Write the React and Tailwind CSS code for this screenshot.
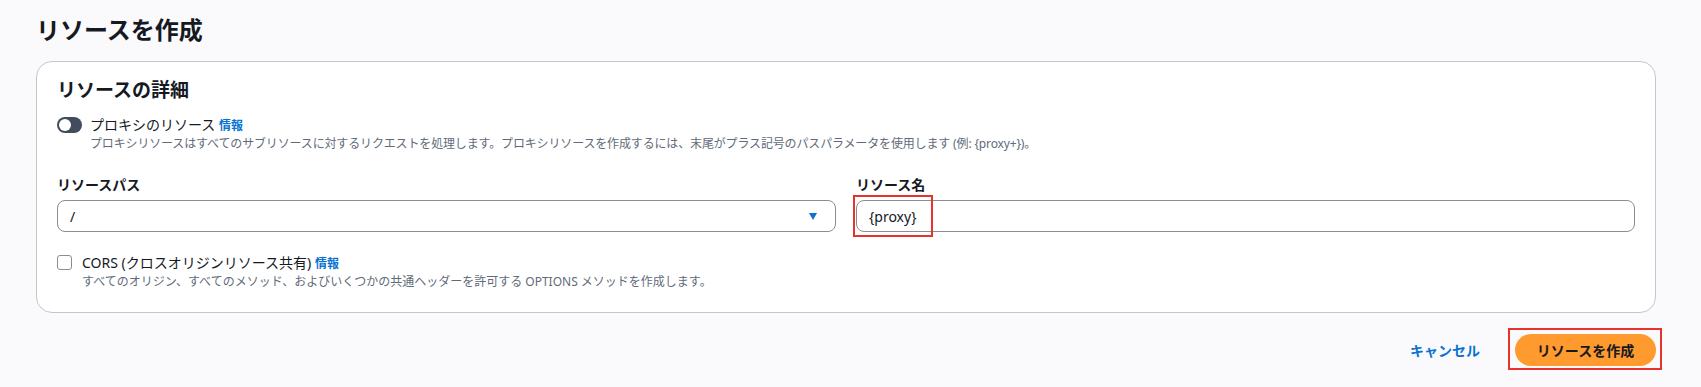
import React from "react";

const font = { fontFamily: '"Noto Sans", "Noto Sans CJK JP", sans-serif' };

export default function App() {
  return (
    <div className="min-h-[387px] bg-[#fafafd] pl-[36px] pr-[45px] pt-[15px] text-[#16191f]" style={font}>
      <h1 className="text-[24px] font-bold leading-[30px]">リソースを作成</h1>

      <div className="mt-[16px] rounded-2xl border border-[#c6c6cd] bg-white px-5 pt-[16px] pb-[22px]">
        <h2 className="text-[19px] font-bold leading-[24px]">リソースの詳細</h2>

        <div className="mt-[13px] flex gap-2">
          <div className="mt-[2px] flex h-[16px] w-[25px] shrink-0 items-center rounded-full bg-[#414d5c] px-[2px]">
            <div className="h-[12px] w-[12px] rounded-full bg-white" />
          </div>
          <div>
            <div className="text-[14px] leading-[20px]">
              プロキシのリソース <span className="text-[12px] font-bold text-[#0972d3]">情報</span>
            </div>
            <div className="text-[12px] leading-[16px] tracking-[-0.15px] text-[#5f6b7a]">
              プロキシリソースはすべてのサブリソースに対するリクエストを処理します。プロキシリソースを作成するには、末尾がプラス記号のパスパラメータを使用します (例: {"{proxy+}"})。
            </div>
          </div>
        </div>

        <div className="mt-[23px] grid grid-cols-2 gap-5">
          <div>
            <div className="text-[14px] font-bold leading-[20px]">リソースパス</div>
            <div className="mt-[5px] flex h-[32px] items-center justify-between rounded-lg border border-[#8c8c94] pl-3 pr-[18px] text-[14px]">
              <span>/</span>
              <svg width="8" height="7" viewBox="0 0 8 7">
                <path d="M0 0 L8 0 L4 7 Z" fill="#0972d3" />
              </svg>
            </div>
          </div>
          <div>
            <div className="text-[14px] font-bold leading-[20px]">リソース名</div>
            <div className="relative mt-[5px] flex h-[32px] items-center rounded-lg border border-[#8c8c94] pl-3 text-[14px]">
              <span>{"{proxy}"}</span>
              <div className="absolute left-[-4px] top-[-6px] h-[42px] w-[80px] border-2 border-[#e8322b]" />
            </div>
          </div>
        </div>

        <div className="mt-[21px] flex gap-[10px]">
          <div className="mt-[2px] h-[15px] w-[15px] shrink-0 rounded-[3px] border border-[#8c8c94]" />
          <div>
            <div className="text-[14px] leading-[20px]">
              CORS (クロスオリジンリソース共有) <span className="text-[12px] font-bold text-[#0972d3]">情報</span>
            </div>
            <div className="text-[12px] leading-[16px] text-[#5f6b7a]">
              すべてのオリジン、すべてのメソッド、およびいくつかの共通ヘッダーを許可する OPTIONS メソッドを作成します。
            </div>
          </div>
        </div>
      </div>

      <div className="mt-[21px] flex items-center justify-end">
        <span className="mr-[35px] text-[14px] font-bold text-[#0972d3]">キャンセル</span>
        <div className="relative">
          <div className="flex h-[32px] w-[141px] items-center justify-center rounded-full bg-[#ff9a2e] text-[14px] font-bold text-[#16191f]">
            リソースを作成
          </div>
          <div className="absolute left-[-7px] top-[-6px] h-[42px] w-[154px] border-2 border-[#e8322b]" />
        </div>
      </div>
    </div>
  );
}
